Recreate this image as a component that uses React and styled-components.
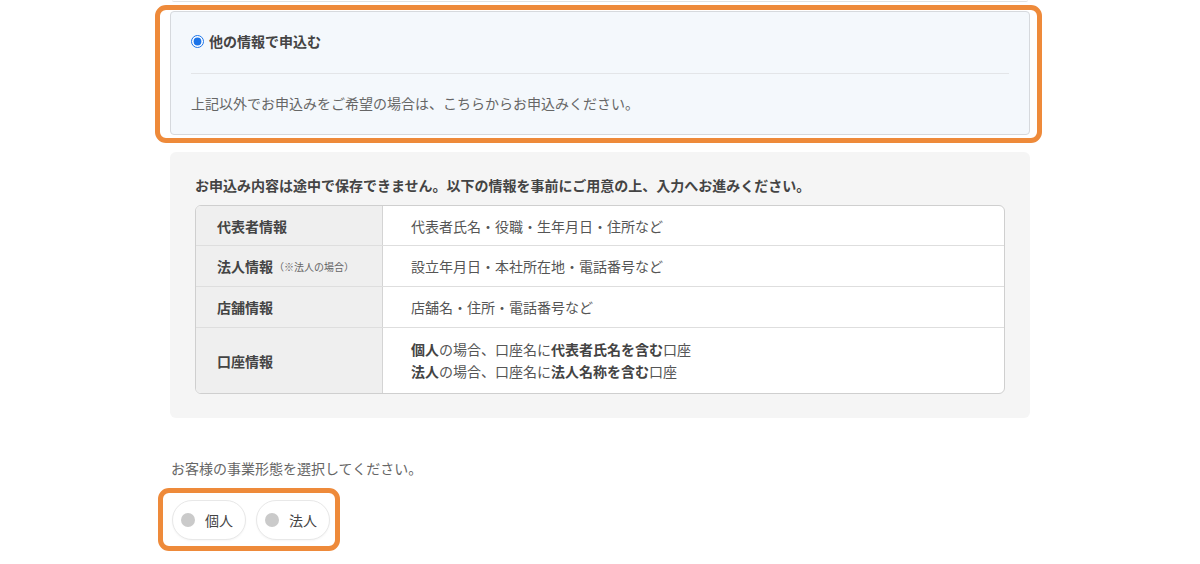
import React from "react";
import styled, { createGlobalStyle } from "styled-components";

const GlobalStyle = createGlobalStyle`
  body {
    margin: 0;
    background: #fff;
    font-family: "Noto Sans CJK JP", "Noto Sans", sans-serif;
    color: #444;
  }
`;

const Page = styled.div`
  width: 860px;
  margin: 0 auto;
  display: flex;
  flex-direction: column;
`;

// bottom edge of the card above, scrolled out of view
const PrevCard = styled.div`
  height: 1px;
  margin: 0 2px;
  background: #fff;
  border-bottom: 1px solid #e2e2e2;
  border-radius: 0 0 4px 4px;
`;

const Highlight = styled.div`
  border: 5px solid #ee8a3a;
  border-radius: 11px;
  margin: ${(p) => p.$margin};
  padding: ${(p) => p.$padding};
  align-self: ${(p) => (p.$inline ? "flex-start" : "stretch")};
`;

const OptionCard = styled.div`
  background: #f4f8fc;
  border: 1px solid #d6d9dd;
  border-radius: 4px;
  padding: 18px 20px 20px 20px;
`;

const RadioLabel = styled.label`
  display: flex;
  align-items: center;
  gap: 5px;
  font-size: 14px;
  line-height: 22px;
  font-weight: 700;
  color: #444;

  input {
    margin: 0;
    width: 13px;
    height: 13px;
    accent-color: #1a73e8;
  }
`;

const Divider = styled.hr`
  border: 0;
  border-top: 1px solid #e3e5e8;
  margin: 21px 0 18px;
`;

const Note = styled.p`
  margin: 0;
  font-size: 14px;
  line-height: 22px;
  color: #666;
`;

const InfoBox = styled.section`
  margin-top: 9px;
  background: #f5f5f5;
  border-radius: 6px;
  padding: 23px 25px 24px;
`;

const InfoTitle = styled.h3`
  margin: 0 0 10px;
  font-size: 14px;
  line-height: 20px;
  font-weight: 700;
  color: #444;
`;

const Table = styled.div`
  border: 1px solid #cfcfcf;
  border-radius: 6px;
  overflow: hidden;
  background: #fff;
`;

const Row = styled.div`
  display: grid;
  grid-template-columns: 187px 1fr;
  min-height: 39px;
  & + & {
    border-top: 1px solid #dedede;
    min-height: 40px;
  }
`;

const HeadCell = styled.div`
  display: flex;
  align-items: center;
  background: #efefef;
  border-right: 1px solid #d4d4d4;
  padding: 0 21px;
  font-size: 14px;
  font-weight: 700;
  color: #444;
`;

const Sub = styled.span`
  font-size: 10px;
  font-weight: 400;
  color: #666;
  margin-left: 1px;
`;

const DataCell = styled.div`
  display: flex;
  flex-direction: column;
  justify-content: center;
  padding: ${(p) => (p.$multi ? "10px 28px 11px" : "0 28px")};
  font-size: 14px;
  line-height: 22px;
  color: #555;

  b {
    color: #444;
    font-weight: 700;
  }
`;

const Question = styled.p`
  margin: 39px 0 9px 1px;
  font-size: 14px;
  line-height: 22px;
  color: #666;
`;

const PillGroup = styled.div`
  display: flex;
  gap: 10px;
`;

const Pill = styled.button`
  display: flex;
  align-items: center;
  gap: 10px;
  height: 40px;
  padding: 0 12px 0 8px;
  border: 1px solid #e8e8e8;
  border-radius: 20px;
  background: #fff;
  box-shadow: 0 1px 2px rgba(0, 0, 0, 0.04);
  font-family: inherit;
  font-size: 14px;
  color: #444;
  cursor: pointer;
`;

const Dot = styled.span`
  width: 14px;
  height: 14px;
  border-radius: 50%;
  background: #cacaca;
`;

const rows = [
  { head: "代表者情報", body: ["代表者氏名・役職・生年月日・住所など"] },
  { head: "法人情報", sub: "（※法人の場合）", body: ["設立年月日・本社所在地・電話番号など"] },
  { head: "店舗情報", body: ["店舗名・住所・電話番号など"] },
];

export default function App() {
  return (
    <>
      <GlobalStyle />
      <Page>
        <PrevCard />
        <Highlight $margin="3px -12px 0 -15px" $padding="1px 7px 3px 10px">
          <OptionCard>
            <RadioLabel>
              <input type="radio" name="apply" checked readOnly />
              他の情報で申込む
            </RadioLabel>
            <Divider />
            <Note>上記以外でお申込みをご希望の場合は、こちらからお申込みください。</Note>
          </OptionCard>
        </Highlight>

        <InfoBox>
          <InfoTitle>
            お申込み内容は途中で保存できません。以下の情報を事前にご用意の上、入力へお進みください。
          </InfoTitle>
          <Table>
            {rows.map((r, i) => (
              <Row key={i}>
                <HeadCell>
                  {r.head}
                  {r.sub && <Sub>{r.sub}</Sub>}
                </HeadCell>
                <DataCell>{r.body[0]}</DataCell>
              </Row>
            ))}
            <Row>
              <HeadCell>口座情報</HeadCell>
              <DataCell $multi>
                <span>
                  <b>個人</b>の場合、口座名に<b>代表者氏名を含む</b>口座
                </span>
                <span>
                  <b>法人</b>の場合、口座名に<b>法人名称を含む</b>口座
                </span>
              </DataCell>
            </Row>
          </Table>
        </InfoBox>

        <Question>お客様の事業形態を選択してください。</Question>
        <Highlight $inline $margin="0 0 0 -12px" $padding="7px 5px 6px 9px">
          <PillGroup>
            <Pill type="button">
              <Dot />
              個人
            </Pill>
            <Pill type="button">
              <Dot />
              法人
            </Pill>
          </PillGroup>
        </Highlight>
      </Page>
    </>
  );
}
